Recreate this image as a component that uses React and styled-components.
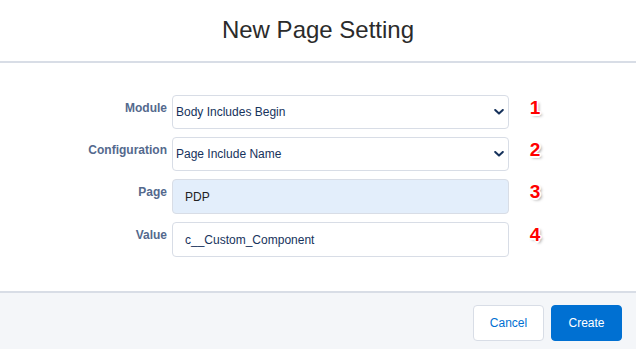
import React from "react";
import styled, { createGlobalStyle } from "styled-components";

const COLORS = {
  border: "#d8dde6",
  label: "#54698d",
  text: "#16325c",
  brand: "#0070d2",
  footer: "#f4f6f9",
};

const GlobalStyle = createGlobalStyle`
  body {
    margin: 0;
    background: #fff;
    font-family: "Liberation Sans", Arial, sans-serif;
  }
`;

const fields = [
  { label: "Module", kind: "select", value: "Body Includes Begin" },
  { label: "Configuration", kind: "select", value: "Page Include Name" },
  { label: "Page", kind: "input", value: "PDP", filled: true },
  { label: "Value", kind: "input", value: "c__Custom_Component" },
];

const Chevron = () => (
  <svg width="10" height="6" viewBox="0 0 10 6">
    <path
      d="M1.2 1 L5 4.6 L8.8 1"
      fill="none"
      stroke="#16325c"
      strokeWidth="2"
      strokeLinecap="round"
      strokeLinejoin="round"
    />
  </svg>
);

const App = () => {
  return (
    <Modal>
      <GlobalStyle />
      <Header>
        <Title>New Page Setting</Title>
      </Header>
      <Body>
        {fields.map((f, i) => (
          <React.Fragment key={f.label}>
            <Label>{f.label}</Label>
            {f.kind === "select" ? (
              <SelectWrap>
                <Select defaultValue={f.value}>
                  <option>{f.value}</option>
                </Select>
                <IconWrap>
                  <Chevron />
                </IconWrap>
              </SelectWrap>
            ) : (
              <Input defaultValue={f.value} $filled={f.filled} />
            )}
            <Step>{i + 1}</Step>
          </React.Fragment>
        ))}
      </Body>
      <Footer>
        <Button>Cancel</Button>
        <Button $primary>Create</Button>
      </Footer>
    </Modal>
  );
};

const Modal = styled.div`
  width: 636px;
  height: 349px;
  display: flex;
  flex-direction: column;
  background: #fff;
  overflow: hidden;
`;

const Header = styled.div`
  height: 61px;
  border-bottom: 2px solid ${COLORS.border};
  display: flex;
  align-items: center;
  justify-content: center;
`;

const Title = styled.h2`
  margin: 0;
  padding-bottom: 1px;
  font-size: 24px;
  font-weight: normal;
  color: #2b2b2b;
`;

const Body = styled.div`
  display: grid;
  grid-template-columns: 167px 337px 42px;
  column-gap: 5px;
  row-gap: 8px;
  padding: 32px 0 34px;
`;

const Label = styled.label`
  text-align: right;
  font-size: 12px;
  font-weight: bold;
  line-height: 18px;
  padding-top: 4px;
  color: ${COLORS.label};
`;

const fieldBase = `
  box-sizing: border-box;
  width: 100%;
  margin: 0;
  border: 1px solid ${COLORS.border};
  border-radius: 4px;
  font-family: "Liberation Sans", Arial, sans-serif;
  font-size: 12px;
  color: ${COLORS.text};
  outline: none;
`;

const SelectWrap = styled.div`
  position: relative;
`;

const Select = styled.select`
  ${fieldBase}
  height: 34px;
  padding: 0 24px 0 3px;
  appearance: none;
  background: #fff;
`;

const IconWrap = styled.span`
  position: absolute;
  right: 5px;
  top: 0;
  bottom: 0;
  display: flex;
  align-items: center;
  pointer-events: none;
`;

const Input = styled.input`
  ${fieldBase}
  height: 35px;
  padding: 0 12px;
  background: ${(p) => (p.$filled ? "#e3eefb" : "#fff")};
  color: ${(p) => (p.$filled ? "#222" : COLORS.text)};
`;

const Step = styled.span`
  text-align: center;
  font-size: 19px;
  font-weight: bold;
  line-height: 25px;
  color: #f00;
  text-shadow: -1px -1px 0 #fff, 1px -1px 0 #fff, -1px 1px 0 #fff,
    1px 1px 0 #fff, 0 -1.5px 0 #fff, 0 1.5px 0 #fff, -1.5px 0 0 #fff,
    1.5px 0 0 #fff, 2px 2px 3px rgba(0, 0, 0, 0.4);
`;

const Footer = styled.div`
  flex: 1;
  border-top: 2px solid ${COLORS.border};
  background: ${COLORS.footer};
  display: flex;
  justify-content: flex-end;
  align-items: flex-start;
  gap: 7px;
  padding: 12px 14px 0;
`;

const Button = styled.button`
  width: 71px;
  height: 36px;
  border-radius: 4px;
  font-family: "Liberation Sans", Arial, sans-serif;
  font-size: 12px;
  cursor: pointer;
  border: 1px solid ${(p) => (p.$primary ? COLORS.brand : COLORS.border)};
  background: ${(p) => (p.$primary ? COLORS.brand : "#fff")};
  color: ${(p) => (p.$primary ? "#fff" : COLORS.brand)};
`;

export default App;
